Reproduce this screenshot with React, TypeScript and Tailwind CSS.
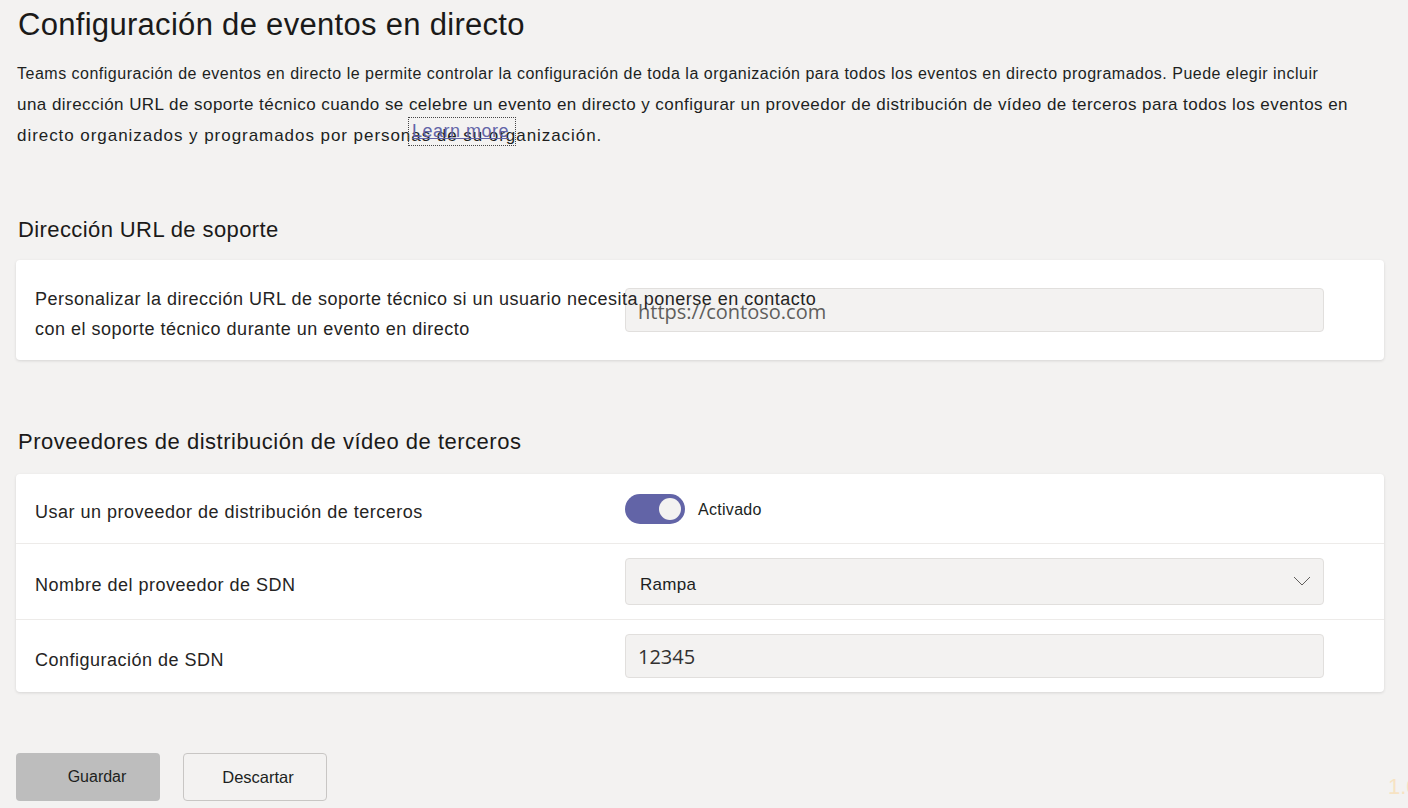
const Row = ({
  label,
  children,
  className,
}: {
  label: string;
  children: React.ReactNode;
  className: string;
}) => (
  <div className={`flex items-center ${className}`}>
    <div className="w-[609px] shrink-0 pl-[19px] pt-[8px] text-[18px] tracking-[0.5px]">
      {label}
    </div>
    <div className="flex-1 pr-[60px]">{children}</div>
  </div>
);

const App = () => {
  return (
    <div className="min-h-screen bg-[#f3f2f1] font-['Liberation_Sans',Arial,sans-serif] text-[#252423] relative overflow-hidden">
      <div className="pl-[16px] pr-[24px] pt-[5px]">
        <h1 className="ml-[2px] text-[31px] leading-[40px] tracking-[0.3px] text-[#1b1a19]">
          Configuración de eventos en directo
        </h1>

        <p className="relative mt-[13px] ml-[1px] w-[1380px] leading-[31px] text-[#201f1e]">
          <span className="text-[16px] tracking-[0.5px]">
            Teams configuración de eventos en directo le permite controlar la
            configuración de toda la organización para todos los eventos en
            directo programados. Puede elegir incluir
          </span>
          <br />
          <span className="text-[17px] tracking-[0.45px]">
            una dirección URL de soporte técnico cuando se celebre un evento en
            directo y configurar un proveedor de distribución de vídeo de
            terceros para todos los eventos en
          </span>
          <br />
          <span className="text-[17px] tracking-[0.95px]">
            directo organizados y programados por personas de su organización.
          </span>
          <a className="absolute left-[391px] top-[59px] h-[29px] w-[108px] border border-dotted border-[#444] pl-[3px] text-[18px] leading-[26px] tracking-[0.5px] text-[#6264a7] underline">
            Learn more
          </a>
        </p>

        {/* Support URL */}
        <h2 className="mt-[65px] ml-[2px] text-[22px] leading-[28px] tracking-[0.4px] text-[#1b1a19]">
          Dirección URL de soporte
        </h2>
        <div className="mt-[16px] h-[100px] rounded bg-white shadow-[0_1px_3px_rgba(0,0,0,0.12)] flex items-center">
          <div className="w-[609px] shrink-0 pl-[19px] relative z-10">
            <div className="w-[820px] text-[18px] leading-[30px] tracking-[0.5px] pt-[8px]">
              Personalizar la dirección URL de soporte técnico si un usuario
              necesita ponerse en contacto
              <br />
              con el soporte técnico durante un evento en directo
            </div>
          </div>
          <div className="flex-1 pr-[60px]">
            <div className="h-[44px] rounded border border-[#e1dfdd] bg-[#f3f2f1] pl-[12px] flex items-center font-['Open_Sans',sans-serif] text-[20px] text-[#605e5c] pt-[4px]">
              https://contoso.com
            </div>
          </div>
        </div>

        {/* Third-party providers */}
        <h2 className="mt-[68px] ml-[2px] text-[22px] leading-[28px] tracking-[0.5px] text-[#1b1a19]">
          Proveedores de distribución de vídeo de terceros
        </h2>
        <div className="mt-[18px] rounded bg-white shadow-[0_1px_3px_rgba(0,0,0,0.12)]">
          <Row
            label="Usar un proveedor de distribución de terceros"
            className="h-[70px] border-b border-[#edebe9]"
          >
            <div className="flex items-center gap-[13px]">
              <div className="h-[30px] w-[60px] rounded-full bg-[#6264a7] flex items-center justify-end pr-[4px]">
                <div className="h-[22px] w-[22px] rounded-full bg-[#f3f2f1]" />
              </div>
              <span className="text-[16px] tracking-[0.3px] text-[#201f1e] pt-[3px]">
                Activado
              </span>
            </div>
          </Row>
          <Row
            label="Nombre del proveedor de SDN"
            className="h-[76px] border-b border-[#edebe9]"
          >
            <div className="h-[47px] rounded border border-[#e1dfdd] bg-[#f3f2f1] pl-[14px] pr-[12px] flex items-center justify-between text-[17px] tracking-[0.3px] text-[#201f1e]">
              <span className="pt-[6px]">Rampa</span>
              <svg
                width="18"
                height="10"
                viewBox="0 0 18 10"
                fill="none"
                stroke="#605e5c"
                strokeWidth="1"
                className="mb-[1px]"
              >
                <path d="M1 1l8 8 8-8" />
              </svg>
            </div>
          </Row>
          <Row label="Configuración de SDN" className="h-[72px]">
            <div className="h-[44px] rounded border border-[#e1dfdd] bg-[#f3f2f1] pl-[12px] flex items-center font-['Open_Sans',sans-serif] text-[20px] text-[#323130] pt-[2px]">
              12345
            </div>
          </Row>
        </div>

        {/* Actions */}
        <div className="mt-[61px] flex gap-[23px]">
          <button className="h-[48px] w-[144px] rounded bg-[#bdbdbd] pl-[18px] text-[16px] text-[#201f1e]">
            Guardar
          </button>
          <button className="h-[48px] w-[144px] rounded border border-[#c8c6c4] bg-[#f3f2f1] pl-[6px] text-[16.5px] text-[#201f1e]">
            Descartar
          </button>
        </div>
      </div>

      <span className="absolute left-[1388px] top-[770px] text-[22px] text-[#f7e3c3]">
        1.0
      </span>
    </div>
  );
};

export default App;
